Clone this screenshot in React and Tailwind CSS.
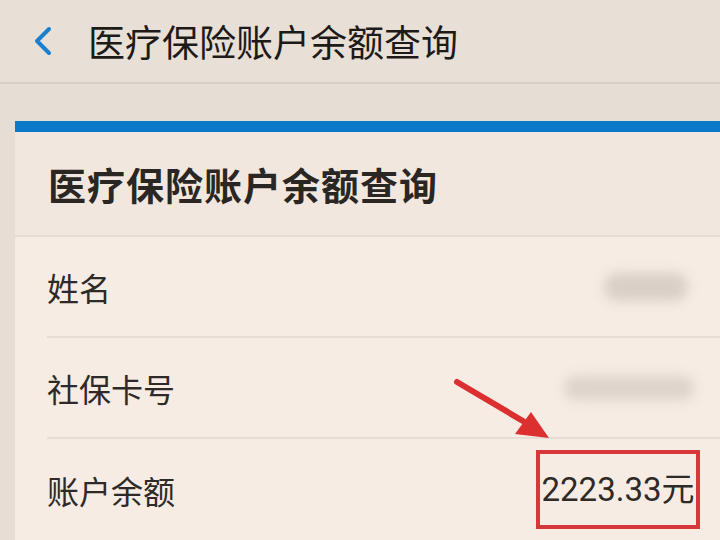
import React from "react";

const font = { fontFamily: '"Noto Sans CJK SC", "Noto Sans", sans-serif' };

function Row({ label, children, last }) {
  return (
    <div className={`ml-[32px] flex h-[101px] items-center justify-between pr-[26px] ${last ? "" : "border-b-2 border-[#e8ddd4]"}`}>
      <span className="text-[32px] leading-none text-[#2e2a27]">{label}</span>
      {children}
    </div>
  );
}

export default function App() {
  return (
    <div style={font} className="h-[540px] w-[720px] overflow-hidden bg-[#e6ddd5]">
      <header className="flex h-[84px] items-center border-b-2 border-[#d8cfc6] bg-[#e8dfd7]">
        <svg width="60" height="40" viewBox="0 0 60 40" className="ml-[18px]">
          <path d="M31 8 L19 20 L31 32" fill="none" stroke="#1b7fcf" strokeWidth="4" strokeLinecap="round" strokeLinejoin="round" />
        </svg>
        <h1 className="ml-[10px] text-[37px] leading-none text-[#1d1a18]">医疗保险账户余额查询</h1>
      </header>

      <div className="ml-[15px] mt-[37px] bg-[#f6ece4]">
        <div className="h-[11px] bg-[#0b79c9]" />
        <div className="flex h-[105px] items-center border-b-2 border-[#e6dbd2] bg-[#f2e7de] pl-[33px]">
          <h2 className="text-[38px] font-bold leading-none tracking-[1px] text-[#2a2623]">医疗保险账户余额查询</h2>
        </div>
        <Row label="姓名">
          <div className="mr-[6px] h-[28px] w-[84px] rounded-full bg-[#d9cfc7] blur-[6px]" />
        </Row>
        <Row label="社保卡号">
          <div className="h-[24px] w-[130px] rounded-full bg-[#ddd3cb] blur-[6px]" />
        </Row>
        <Row label="账户余额" last>
          <div className="-mr-[6px] flex h-[79px] w-[164px] items-center justify-center border-[4px] border-[#d8373a]">
            <span style={{ fontFamily: 'Roboto, "Noto Sans CJK SC", sans-serif' }} className="text-[33px] leading-none text-[#2e2a27]">2223.33元</span>
          </div>
        </Row>
      </div>

      <svg className="pointer-events-none absolute left-0 top-0" width="720" height="540">
        <line x1="457" y1="382" x2="528" y2="424" stroke="#dc3030" strokeWidth="6" strokeLinecap="round" />
        <polygon points="549,438 515,434 531,412" fill="#dc3030" />
      </svg>
    </div>
  );
}
